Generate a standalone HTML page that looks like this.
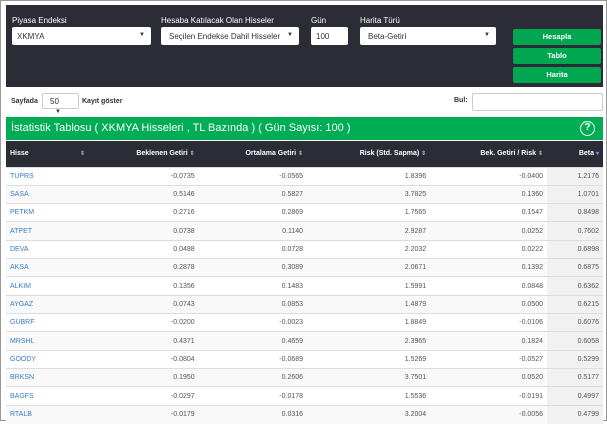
<!DOCTYPE html><html><head><meta charset="utf-8"><style>
*{margin:0;padding:0;box-sizing:border-box}
body{width:607px;height:421px;overflow:hidden;background:#fff;font-family:"Liberation Sans",sans-serif;font-size:8px;color:#333;position:relative;border:1px solid #999}
.panel{position:absolute;left:5px;top:4px;width:597px;height:82px;background:#2b2c36}
.lbl{position:absolute;color:#fff;font-size:8px}
.sel{position:absolute;background:#fff;border-radius:2px;height:18px;font-size:8px;padding:5px 5px;color:#333}
.sel i{position:absolute;right:6px;top:5px;font-style:normal;font-size:6px}
.btn{position:absolute;left:507px;width:88px;height:16px;background:#00a650;color:#fff;font-weight:bold;font-size:7.5px;text-align:center;line-height:16px;border-radius:2px}
.title{position:absolute;left:5px;top:116px;width:597px;height:23px;background:#00ad55;color:#fff;font-size:11px;line-height:23px;padding-left:5px}
.q{position:absolute;right:8px;top:4px;width:15px;height:15px;border:1.5px solid #fff;border-radius:50%;font-size:10px;line-height:12px;text-align:center;font-weight:bold}
table{position:absolute;left:5px;top:140px;width:597px;border-collapse:collapse;font-size:7px}
th{background:#2b2c36;color:#fff;height:26px;text-align:right;padding:0 4px;font-weight:bold}
td{height:18.33px;text-align:right;padding:0 4px;color:#555;border-top:1px solid #ddd}
td:first-child,th:first-child{text-align:left;color:#3a7bc8}
th:first-child{color:#fff}
tr:nth-child(odd) td{background:#f9f9f9}
td:last-child{background:#f1f1f1!important}
.s{color:#aaa;font-size:6px}
</style></head><body>
<div class="panel">
<div class="lbl" style="left:6px;top:11px">Piyasa Endeksi</div>
<div class="sel" style="left:6px;top:22px;width:139px">XKMYA<i>▼</i></div>
<div class="lbl" style="left:155px;top:11px">Hesaba Katılacak Olan Hisseler</div>
<div class="sel" style="left:155px;top:22px;width:138px;padding-left:8px">Seçilen Endekse Dahil Hisseler<i>▼</i></div>
<div class="lbl" style="left:305px;top:11px">Gün</div>
<div class="sel" style="left:305px;top:22px;width:37px">100</div>
<div class="lbl" style="left:354px;top:11px">Harita Türü</div>
<div class="sel" style="left:354px;top:22px;width:136px;padding-left:8px">Beta-Getiri<i>▼</i></div>
<div class="btn" style="top:24px">Hesapla</div>
<div class="btn" style="top:43px">Tablo</div>
<div class="btn" style="top:62px">Harita</div>
</div>
<div style="position:absolute;left:10px;top:97px;font-size:7px;font-weight:bold">Sayfada</div>
<div style="position:absolute;left:41px;top:92px;width:37px;height:16px;border:1px solid #ccc;border-radius:2px;font-size:8px;padding:3px 7px">50 <span style="font-size:6px;margin-left:5px">▼</span></div>
<div style="position:absolute;left:81px;top:97px;font-size:7px;font-weight:bold">Kayıt göster</div>
<div style="position:absolute;left:453px;top:96px;font-size:7px;font-weight:bold">Bul:</div>
<div style="position:absolute;left:471px;top:92px;width:131px;height:18px;border:1px solid #ccc;border-radius:2px"></div>
<div class="title">İstatistik Tablosu ( XKMYA Hisseleri , TL Bazında ) ( Gün Sayısı: 100 )<div class="q">?</div></div>
<table>
<tr><th style="width:70px">Hisse</th><th style="width:10px;text-align:left"><span class="s">⇕</span></th><th>Beklenen Getiri <span class="s">⇕</span></th><th>Ortalama Getiri <span class="s">⇕</span></th><th>Risk (Std. Sapma) <span class="s">⇕</span></th><th>Bek. Getiri / Risk <span class="s">⇕</span></th><th style="width:56px">Beta <span style="color:#88f;font-size:6px">▾</span></th></tr>
<tr><td colspan="2">TUPRS</td><td>-0.0735</td><td>-0.0565</td><td>1.8396</td><td>-0.0400</td><td>1.2176</td></tr>
<tr><td colspan="2">SASA</td><td>0.5146</td><td>0.5827</td><td>3.7825</td><td>0.1360</td><td>1.0701</td></tr>
<tr><td colspan="2">PETKM</td><td>0.2716</td><td>0.2869</td><td>1.7565</td><td>0.1547</td><td>0.8498</td></tr>
<tr><td colspan="2">ATPET</td><td>0.0738</td><td>0.1140</td><td>2.9287</td><td>0.0252</td><td>0.7602</td></tr>
<tr><td colspan="2">DEVA</td><td>0.0488</td><td>0.0728</td><td>2.2032</td><td>0.0222</td><td>0.6898</td></tr>
<tr><td colspan="2">AKSA</td><td>0.2878</td><td>0.3089</td><td>2.0671</td><td>0.1392</td><td>0.6875</td></tr>
<tr><td colspan="2">ALKIM</td><td>0.1356</td><td>0.1483</td><td>1.5991</td><td>0.0848</td><td>0.6362</td></tr>
<tr><td colspan="2">AYGAZ</td><td>0.0743</td><td>0.0853</td><td>1.4879</td><td>0.0500</td><td>0.6215</td></tr>
<tr><td colspan="2">GUBRF</td><td>-0.0200</td><td>-0.0023</td><td>1.8849</td><td>-0.0106</td><td>0.6076</td></tr>
<tr><td colspan="2">MRSHL</td><td>0.4371</td><td>0.4659</td><td>2.3965</td><td>0.1824</td><td>0.6058</td></tr>
<tr><td colspan="2">GOODY</td><td>-0.0804</td><td>-0.0689</td><td>1.5269</td><td>-0.0527</td><td>0.5299</td></tr>
<tr><td colspan="2">BRKSN</td><td>0.1950</td><td>0.2606</td><td>3.7501</td><td>0.0520</td><td>0.5177</td></tr>
<tr><td colspan="2">BAGFS</td><td>-0.0297</td><td>-0.0178</td><td>1.5536</td><td>-0.0191</td><td>0.4997</td></tr>
<tr><td colspan="2">RTALB</td><td>-0.0179</td><td>0.0316</td><td>3.2004</td><td>-0.0056</td><td>0.4799</td></tr>
</table>
</body></html>
